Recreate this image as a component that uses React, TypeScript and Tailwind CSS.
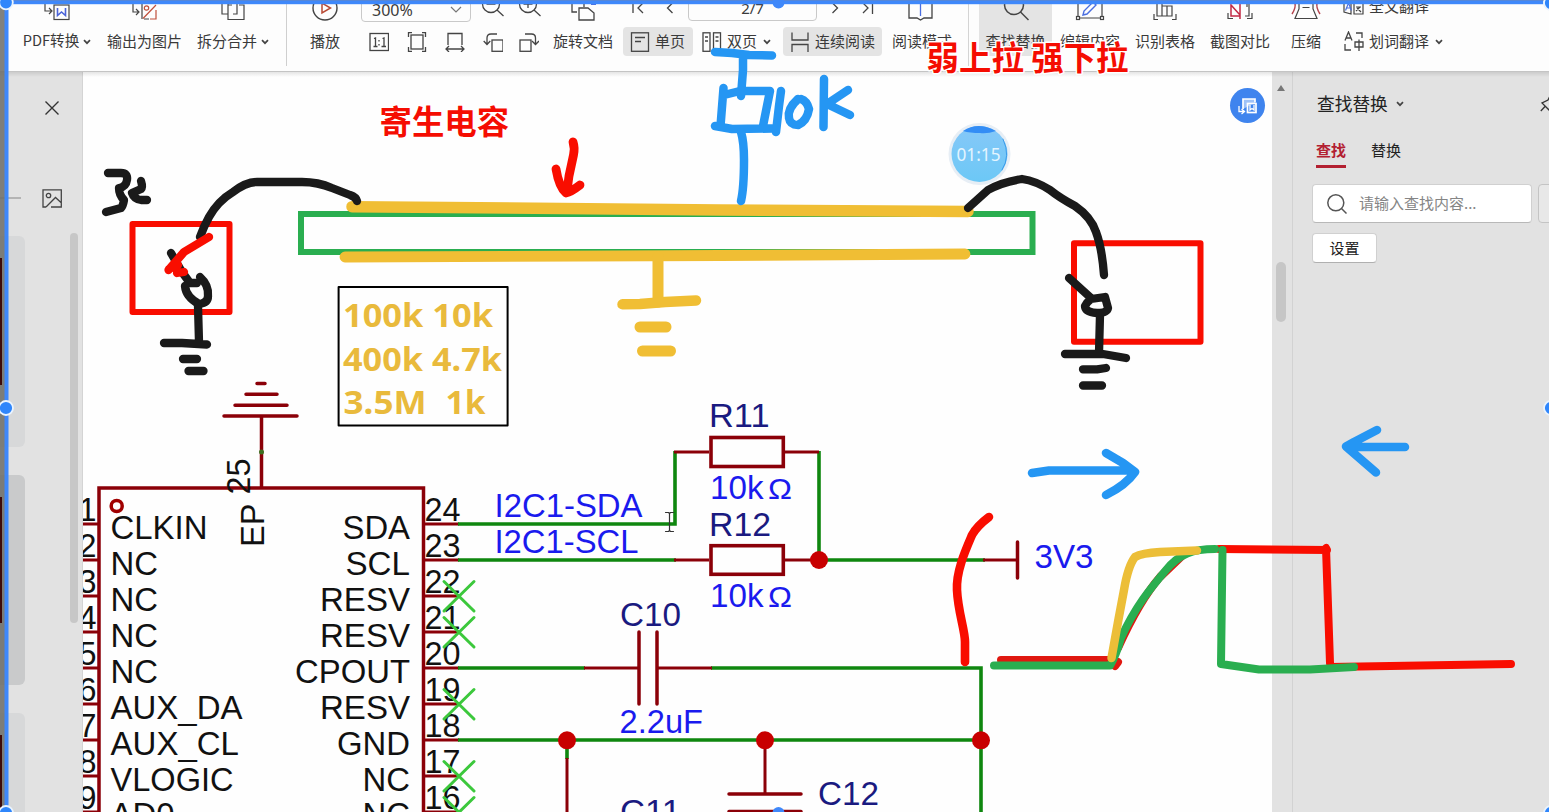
import React from "react";

type Kids = { children?: React.ReactNode };

const Chevron = ({ className = "" }: { className?: string }) => (
  <svg width="8" height="6" viewBox="0 0 8 6" className={"shrink-0 " + className} fill="none" stroke="#444" strokeWidth="1.7">
    <path d="M1 1.2 4 4.2 7 1.2" />
  </svg>
);

const TopIcon = ({ children }: Kids) => (
  <svg width="30" height="27" viewBox="0 0 30 27" className="block shrink-0" fill="none" stroke="#444" strokeWidth="1.2">
    {children}
  </svg>
);

const RowIcon = ({ children, className = "" }: Kids & { className?: string }) => (
  <svg width="20" height="20" viewBox="0 0 20 20" className={"shrink-0 " + className} fill="none" stroke="#444" strokeWidth="1.3">
    {children}
  </svg>
);

const Tool = ({ icon, label, className, arrow }: { icon: React.ReactNode; label: string; className: string; arrow?: boolean }) => (
  <div className={"flex h-14 shrink-0 flex-col items-center " + className}>
    {icon}
    <div className="flex h-[29px] items-center">
      <span className="pb-[2px]">{label}</span>
      {arrow && <Chevron className="ml-1" />}
    </div>
  </div>
);

function Toolbar() {
  return (
    <header className="z-10 flex h-[72px] shrink-0 items-start overflow-hidden whitespace-nowrap border-b border-[#c4c4c4] bg-[#fdfdfd] text-[15px] leading-none text-[#3a3a3a]">
      <Tool
        className="ml-[23px] w-[68px] text-[14.6px]"
        label="PDF转换"
        arrow
        icon={
          <TopIcon>
            <path d="M3 3v8h6M7 8l3 3-3 3" />
            <rect x="12" y="5" width="15" height="14.5" />
            <path d="M15.5 8v7.500l4-3.500 4 3.500V8" stroke="#4a63d8" strokeWidth="1.600" />
          </TopIcon>
        }
      />
      <Tool
        className="ml-4 w-[75px]"
        label="输出为图片"
        icon={
          <TopIcon>
            <path d="M3 3v9h5M6 9l3 3-3 3M12 2v17M14 19h5" />
            <circle cx="16.500" cy="8" r="2.200" stroke="#c0503c" />
            <path d="M13 18.500 26 5M26 10v9h-6" stroke="#c0503c" />
          </TopIcon>
        }
      />
      <Tool
        className="ml-[15px] w-[72px]"
        label="拆分合并"
        arrow
        icon={
          <TopIcon>
            <path d="M4 2v12h6M10 4v15.500h16V5h-5M10 5h4M15 14h4V4" />
          </TopIcon>
        }
      />
      <div className="ml-[17px] h-[66px] w-px shrink-0 bg-[#cfcfcf]" />
      <Tool
        className="ml-[23px] w-[30px]"
        label="播放"
        icon={
          <TopIcon>
            <circle cx="15" cy="8" r="12" strokeWidth="1.400" />
            <path d="M12 3v10l8.500-5z" stroke="#b84a35" strokeWidth="1.500" />
          </TopIcon>
        }
      />

      <div className="ml-[21px] flex w-[600px] shrink-0 flex-col">
        <div className="flex h-[27px] items-start">
          <div className="-mt-1 flex h-[26px] w-[110px] shrink-0 items-center justify-between rounded border border-[#c9c9c9] pl-[10px] pr-2 pt-px">
            <span className="font-['Noto_Sans','Open_Sans',sans-serif] text-[16px]">300%</span>
            <svg width="12" height="8" viewBox="0 0 12 8" fill="none" stroke="#777" strokeWidth="1.200">
              <path d="M1 1l5 5 5-5" />
            </svg>
          </div>
          <svg width="212" height="27" viewBox="471 0 212 27" className="shrink-0" fill="none" stroke="#444" strokeWidth="1.300">
            <circle cx="491" cy="4" r="8.500" />
            <path d="M497 10l6.500 6M486.500 4h9" />
            <circle cx="528" cy="4" r="8.500" />
            <path d="M534 10l6.500 6M523.500 4h9M528-1v9" />
            <path d="M572 3v9h5M579 20V8h9l6 5v7zM584 4v3" />
            <path d="M591 4h5" stroke="#4a6ee0" strokeWidth="2" />
            <path d="M633 3v10M643 3l-5 5 5 5M672.500 3l-5 5 5 5" />
          </svg>
          <div className="-mt-1 ml-[5px] flex h-[25px] w-[129px] shrink-0 items-center justify-center rounded border border-[#c9c9c9] font-['Noto_Sans','Open_Sans',sans-serif] text-[15px]">2/7</div>
          <svg width="140" height="27" viewBox="817 0 140 27" className="shrink-0" fill="none" stroke="#444" strokeWidth="1.300">
            <path d="M832.500 3l5 5-5 5M863 3l5 5-5 5M872.500 3v11" />
            <path d="M909 2v16h8l3.500 2 3.500-2h8V2M909 1h8l3.500 2L924 1h8" />
            <path d="M920.500 3v13" stroke="#4a6ee0" />
          </svg>
        </div>
        <div className="flex h-[29px] items-center">
          <RowIcon className="ml-2">
            <rect x="1" y="1.500" width="18.500" height="17" />
            <path d="M5 6.500 6.500 6v8.500M4.500 14.500h4M13.500 6.500 15 6v8.500M12.500 14.500h4.500M10 8v1.500M10 12v1.500" />
          </RowIcon>
          <RowIcon className="ml-[18px]">
            <rect x="4" y="3" width="12" height="14" />
            <path d="M1.500 5V.7H5M15 .7h3.500V5M1.500 15v4.300H5M15 19.300h3.500V15" />
          </RowIcon>
          <RowIcon className="ml-[18px]">
            <path d="M3 13V1.500h14V13M1 17h18M4 14l-3 3 3 3M16 14l3 3-3 3" />
          </RowIcon>
          <RowIcon className="ml-[18px]">
            <rect x="9" y="8" width="11" height="11.300" />
            <path d="M14 2H8Q4 2 4 6v6M.7 9 4 12.500 7.300 9" />
          </RowIcon>
          <RowIcon className="ml-4">
            <rect x="1" y="8" width="11" height="11.300" />
            <path d="M6 2h6.500q4 0 4 4v6M13 9l3.500 3.500L20 9" />
          </RowIcon>
          <span className="ml-[14px] w-[61px] pb-[2px]">旋转文档</span>
          <div className="ml-[9px] flex h-[29px] w-[70px] shrink-0 items-center rounded bg-[#e4e4e4] pl-[7px]">
            <RowIcon>
              <rect x="1.500" y=".8" width="17" height="18.500" />
              <path d="M5 5.500h10M5 9.500h6" />
            </RowIcon>
            <span className="ml-[5px] pb-[2px]">单页</span>
          </div>
          <RowIcon className="ml-[9px]">
            <rect x="1" y=".8" width="7" height="18.500" />
            <rect x="11.500" y=".8" width="7" height="18.500" />
            <path d="M3 5h3M3 9h3M13.500 5h3M13.500 9h3" />
          </RowIcon>
          <span className="ml-[5px] w-[30px] pb-[2px]">双页</span>
          <Chevron className="ml-[6px]" />
          <div className="ml-3 flex h-[29px] w-[99px] shrink-0 items-center rounded bg-[#e4e4e4] pl-[7px]">
            <RowIcon>
              <path d="M2 .5V8h16V.5M2 20v-7.500h16V20" />
            </RowIcon>
            <span className="ml-[5px] pb-[2px]">连续阅读</span>
          </div>
          <span className="ml-[10px] w-[60px] pb-[2px]">阅读模式</span>
        </div>
      </div>

      <div className="ml-[7px] h-[66px] w-px shrink-0 bg-[#d4d4d4]" />
      <Tool
        className="ml-[10px] w-[73px] rounded-b bg-[#e4e4e4]"
        label="查找替换"
        icon={
          <TopIcon>
            <circle cx="13" cy="5" r="9.500" strokeWidth="1.500" />
            <path d="m19.500 12 8 8" strokeWidth="1.500" />
          </TopIcon>
        }
      />
      <Tool
        className="ml-[8px] w-[60px]"
        label="编辑内容"
        icon={
          <TopIcon>
            <path d="M3 4v12M27 4v12M5 18h20" />
            <rect x="1.500" y="16.500" width="3" height="3" />
            <rect x="25.500" y="16.500" width="3" height="3" />
            <path d="m8 15 1-4 9-9 3 3-9 9z" stroke="#4a6ee0" strokeWidth="1.400" />
          </TopIcon>
        }
      />
      <Tool
        className="ml-[15px] w-[60px]"
        label="识别表格"
        icon={
          <TopIcon>
            <path d="M4 14v5.500h4M22 19.500h4V14M7 3v13h5V3M12 6h5v10h-5M17 6h5v10h-5" />
          </TopIcon>
        }
      />
      <Tool
        className="ml-[15px] w-[60px]"
        label="截图对比"
        icon={
          <TopIcon>
            <path d="M3 13v5.500h5M22 18.500h5V13M20 16h4V4M22 3v4" />
            <path d="M15 2v17M15 16H6V5l9 10" stroke="#c22a45" strokeWidth="1.500" />
          </TopIcon>
        }
      />
      <Tool
        className="ml-[21px] w-[30px]"
        label="压缩"
        icon={
          <TopIcon>
            <path d="M8 3v6L4 18.500h22L22 9V3M11.500 7.500h7" />
            <path d="M4 3q1 5-3 11M26 3q-1 5 3 11" stroke="#b5444e" strokeWidth="1.500" />
          </TopIcon>
        }
      />
      <div className="ml-[22px] flex shrink-0 flex-col">
        <div className="flex h-[27px] items-start">
          <svg width="21" height="16" viewBox="0 0 21 16" fill="none" stroke="#444" strokeWidth="1.200">
            <path d="M11 3H1v9l7 2V4M11 3h9v11h-9zM13 7h5M13 11l4-4M14 8l4 4" />
            <path d="M2.500 10.500 5.500 3l3 7.500M3.500 8h4" stroke="#4a6ee0" />
          </svg>
          <span className="-mt-[2px] ml-[5px]">全文翻译</span>
        </div>
        <div className="flex h-[29px] items-center">
          <svg width="21" height="21" viewBox="0 0 21 21" fill="none" stroke="#444" strokeWidth="1.300">
            <path d="M2 9.500 5.500 1 9 9.500M3 7h5M13 2h6v5M2 13v6h6M12 11h8v5h-8zM16 8.500V20" />
          </svg>
          <span className="ml-[5px] pb-[2px]">划词翻译</span>
          <Chevron className="ml-[6px]" />
        </div>
      </div>
    </header>
  );
}

function Sidebar() {
  return (
    <aside className="flex w-[83px] shrink-0 overflow-hidden border-r border-[#d4d4d4] bg-[#e2e2e2]">
      <div className="flex w-[25px] flex-col">
        <div className="mt-[125px] h-[2px] w-[21px] shrink-0 bg-[#b4b4b4]" />
        <div className="mt-[37px] h-[211px] shrink-0 rounded-r-md bg-[#d7d8d9]" />
        <div className="mt-[28px] h-[210px] shrink-0 rounded-r-md bg-[#c9cacb]" />
        <div className="mt-[28px] h-[99px] shrink-0 rounded-tr-md bg-[#d7d8d9]" />
      </div>
      <div className="flex w-[45px] flex-col pl-[17px]">
        <svg width="20" height="14" viewBox="0 0 20 14" className="mt-[29px]" fill="none" stroke="#333" strokeWidth="1.400">
          <path d="M3.500.5 16.500 13.500M16.500.5 3.500 13.500" />
        </svg>
        <svg width="20" height="19" viewBox="0 0 20 19" className="mt-[74px]" fill="none" stroke="#444" strokeWidth="1.300">
          <path d="M4 18H1V.8h18.300V18H9M4 18l9.500-9.500 6 5.500" />
          <circle cx="6.500" cy="6.500" r="2.200" />
        </svg>
      </div>
      <div className="mt-[161px] h-[390px] w-[8px] rounded-full bg-[#c7c7c7]" />
    </aside>
  );
}

const BASE = [539, 575, 611, 647, 683, 719, 754.5, 790.5, 826];
const LEFT: [string, number][] = [["CLKIN", 97], ["NC", 47.5], ["NC", 47.5], ["NC", 47.5], ["NC", 47.5], ["AUX_DA", 132], ["AUX_CL", 128.5], ["VLOGIC", 123], ["AD0", 64]];
const RIGHT: [string, number][] = [["SDA", 67.5], ["SCL", 64.5], ["RESV", 90], ["RESV", 90], ["CPOUT", 115], ["RESV", 90], ["GND", 73], ["NC", 47.5], ["NC", 47.5]];

type TProps = { x: number; y: number; w: number; fill?: string; s: string };
const T = ({ x, y, w, fill = "#111", s }: TProps) => (
  <text x={x} y={y} textLength={w} lengthAdjust="spacingAndGlyphs" fill={fill}>
    {s}
  </text>
);

function Schematic() {
  const name = "#1a1a80";
  const val = "#1a1aee";
  return (
    <svg width="1189" height="740" viewBox="83 72 1189 740" className="block shrink-0 font-['Liberation_Sans'] text-[33.5px]">
      <g stroke="#8b0008" strokeWidth="3.500" fill="none">
        <path d="M224 416h73M235 405.300h52M246 394.300h31M257 383.500h8" strokeLinecap="round" />
        <path d="M261.500 417v70" />
        <rect x="99" y="488" width="324.500" height="360" />
        {BASE.map((_, i) => (
          <path key={i} d={`M83 ${524 + 36 * i}h16M424 ${524 + 36 * i}h35`} strokeWidth="3" />
        ))}
        <circle cx="116.700" cy="506" r="5.500" stroke="#a00000" />
      </g>
      <circle cx="261.500" cy="452" r="2.500" fill="#3d7020" />

      <g stroke="#0f870f" strokeWidth="3.600" fill="none">
        <path d="M458 524h217V451M458 560h218M819 451v109h166M458 668h127M711 668h270v144M458 740h523M567 740v19" />
      </g>
      <g stroke="#8b0008" strokeWidth="3" fill="none">
        <path d="M674 452h35M785 452h34M674 560h35M785 560h30M584 668h55M657 668h55M983 560h34M567 758v54M765 748v45" />
        <path d="M639 632v72M657 632v72M1017.500 542v36M729 794h72M729 811.500h72" strokeWidth="3.500" strokeLinecap="round" />
        <rect x="711" y="437.500" width="72.300" height="29" strokeWidth="3.600" />
        <rect x="711" y="545.700" width="72.300" height="28.600" strokeWidth="3.600" />
      </g>
      <g fill="#c80000">
        <circle cx="819" cy="560" r="9" />
        <circle cx="567" cy="740.300" r="9" />
        <circle cx="765" cy="740.300" r="9" />
        <circle cx="981" cy="740.300" r="9" />
      </g>

      {LEFT.map(([s, w], i) => (
        <T key={i} x={110.500} y={BASE[i]} w={w} s={s} />
      ))}
      {RIGHT.map(([s, w], i) => (
        <T key={i} x={410 - w} y={BASE[i]} w={w} s={s} />
      ))}
      {BASE.map((_, i) => (
        <g key={i}>
          <T x={78.500} y={521 + 36 * i} w={18} s={String(i + 1)} />
          <T x={424.500} y={521 + 36 * i} w={36} s={String(24 - i)} />
        </g>
      ))}
      <g transform="translate(264.300 547) rotate(-90)">
        <T x={0} y={0} w={43.500} s="EP" />
      </g>
      <g transform="translate(250 494.500) rotate(-90)">
        <T x={0} y={0} w={36} s="25" />
      </g>

      <g stroke="#3cc83c" strokeWidth="3" strokeLinecap="round">
        {[596, 632, 704, 776, 812].map((y) => (
          <path key={y} d={`M444 ${y - 14.500}l30 29.500M474 ${y - 14.500}l-30 29.500`} />
        ))}
      </g>

      <T x={494.500} y={517} w={148} fill={val} s="I2C1-SDA" />
      <T x={494.500} y={553} w={144} fill={val} s="I2C1-SCL" />
      <T x={709} y={426.700} w={60.500} fill={name} s="R11" />
      <T x={709} y={535.500} w={62} fill={name} s="R12" />
      <T x={710} y={499.300} w={53.500} fill={val} s="10k" />
      <T x={710} y={606.700} w={53.500} fill={val} s="10k" />
      <g className="text-[30px]">
        <T x={768} y={499} w={24} fill={val} s="Ω" />
        <T x={768} y={606.500} w={24} fill={val} s="Ω" />
      </g>
      <T x={620} y={625.700} w={61} fill={name} s="C10" />
      <T x={620} y={823} w={61} fill={name} s="C11" />
      <T x={818} y={805} w={61} fill={name} s="C12" />
      <T x={619.500} y={733} w={83.500} fill={val} s="2.2uF" />
      <T x={1034.500} y={568} w={59} fill={val} s="3V3" />
    </svg>
  );
}

function FindPanel() {
  return (
    <aside className="flex min-w-0 grow flex-col overflow-hidden whitespace-nowrap border-l border-[#d2d2d2] bg-[#e2e2e2] pl-[19px] text-[15px] leading-none text-[#222]">
      <div className="mt-[22px] flex h-[20px] shrink-0 items-center pl-[5px]">
        <span className="w-[71px] text-[17.700px]">查找替换</span>
        <Chevron className="ml-2" />
        <svg width="18" height="18" viewBox="0 0 18 18" className="ml-[136px] shrink-0" fill="none" stroke="#333" strokeWidth="1.300">
          <path d="M10 1 8 5 2 8l7 7 3-6 4-2zM5 11.500.8 16" />
        </svg>
      </div>
      <div className="mt-[21px] flex h-[33px] shrink-0 pl-1">
        <div className="flex h-[33px] w-[30px] flex-col justify-between pt-[7px] font-bold text-[#b32031]">
          查找
          <div className="h-[3px] bg-[#b32031]" />
        </div>
        <span className="ml-[25px] pt-[7px]">替换</span>
      </div>
      <div className="mt-4 flex h-[39px] shrink-0">
        <div className="flex w-[220px] shrink-0 items-center rounded border border-[#d0d0d0] border-b-[#b8b8b8] bg-white pl-[14px] text-[#858585]">
          <svg width="20" height="20" viewBox="0 0 20 20" fill="none" stroke="#555" strokeWidth="1.500">
            <circle cx="8.800" cy="8.800" r="8" />
            <path d="m14.500 14.500 5 5" />
          </svg>
          <span className="ml-3 pb-[2px]">请输入查找内容...</span>
        </div>
        <div className="ml-[6px] w-[30px] shrink-0 rounded border border-[#c4c4c4] bg-[#e8e8e8]" />
      </div>
      <div className="mt-[10px] flex h-[30px] w-[65px] shrink-0 items-center justify-center rounded border border-[#d0d0d0] border-b-[#b0b0b0] bg-white pb-[2px]">设置</div>
    </aside>
  );
}

function Annotations() {
  return (
    <svg width="1549" height="812" viewBox="0 0 1549 812" className="pointer-events-none absolute inset-0 z-20" fill="none" strokeLinecap="round" strokeLinejoin="round">
      <defs>
        <linearGradient id="bubble" x1="0" y1="0" x2="0" y2="1">
          <stop offset="0" stopColor="#86c8f8" />
          <stop offset="1" stopColor="#6cc8f6" />
        </linearGradient>
      </defs>

      <g stroke="#2aae50" strokeWidth="6">
        <rect x="301" y="214" width="731.500" height="38" strokeLinejoin="miter" />
      </g>
      <g stroke="#f0be34">
        <path d="M352 206.700 720 210 968 211.500" strokeWidth="11.500" />
        <path d="M345 257 720 255.500 965 254" strokeWidth="10.800" />
        <path d="M658 257v45" strokeWidth="11" />
        <path d="M622.500 304.300 640 304l25-2 31-1.500" strokeWidth="10.500" />
        <path d="M640 327h26M642.500 351h28" strokeWidth="11" />
      </g>

      <g stroke="#f90d00">
        <rect x="132.500" y="224" width="97" height="88" strokeWidth="6" />
        <rect x="1074" y="243.300" width="126.500" height="98.500" strokeWidth="6" />
        <path d="M573 142Q575 148 573.500 155T569 176L567 191M556 169q3 18 10 24 5-1 14-8" strokeWidth="8.800" />
        <path d="M989 517Q977 526 972 535C966 549 956 571 957 590 958 612 965 630 965 642V662" strokeWidth="8.600" />
      </g>

      <g stroke="#1a1a1a" strokeWidth="8.300">
        <path d="M108 173h13q7 0 6 7t-8 8q0 7 5 12-1 6-3 8l-15 4" />
        <path d="M141 181q2 6 0 8l-9 4q2 6 9 7h6" />
        <path d="M200 237Q204 226 209 217 218 201 233 192 246 182 257 182H302Q318 182 332 188L350 195Q356 197 357 201" />
        <path d="M171 253 182 272 190 283H197" />
        <path d="M200 277Q209 285 208 296 208 303 199 304 186 297 185 286" />
        <path d="M198 306 199 342M164 343h18l25 1.500M183 359h14M188.500 371h15" />
        <path d="M968 208 988 190Q1002 182 1022 179 1036 181 1050 190 1060 198 1075 206 1091 217 1096 232 1102 248 1104 275" />
        <path d="M1069 278 1091 298M1091 299 1105 297 1108 308Q1107 313 1097 313 1085 312 1085 306 1087 302 1091 299" />
        <path d="M1100 315 1099 353M1065 354H1103L1126 358M1083 369.300H1097L1106 368M1083 385.500h19" />
      </g>
      <path d="M209 237 184 252 168.500 270M169 269 178 265M177 273 184 272" stroke="#f90d00" strokeWidth="8.300" />

      <g stroke="#2596f3" strokeWidth="8.500">
        <path d="M715 52 732 53 749 55 772 55.500M743 56V70L741 96" />
        <path d="M723.500 88 720.500 126M724 95 740 91H770L763 126M715 126 732 129 772 128.500" />
        <path d="M781 91 779 106 776 132M798 99Q787 109 789 118 790 125 798 125 807 121 809 109 807 101 801 99M824 79 823.500 127M848 90 827 104 850 115" />
        <path d="M741 132Q744 142 744 160 744 188 741 201" />
        <path d="M1032 473 1049 470.500H1132M1106 453 1123 463 1135 472Q1126 485 1106 495M1405 447H1348M1377 430 1354 442 1346 446.500 1376 472.500" />
      </g>

      <g strokeWidth="8">
        <path d="M1001 660h107M1118 662 1115 666M1118 648Q1140 600 1160 577L1185 553" stroke="#e01810" />
        <path d="M1219 549 1327 550 1326 548 1330 663M1330 667 1511 664" stroke="#f90d00" />
        <path d="M994 665.500h116Q1116 656 1121 638C1135 607 1150 589 1166 570 1179 554 1193 549 1215 549" stroke="#2aae50" />
        <path d="M1222.500 550 1221 664 1259 669.500H1310L1354 667" stroke="#2aae50" />
        <path d="M1111.500 658 1118 622 1124 590Q1128 566 1135 557 1142 553 1160 552L1197 550.500" stroke="#ecbe38" strokeWidth="8.500" />
      </g>

      <rect x="338.600" y="287" width="169" height="138.600" stroke="#000" strokeWidth="2" />
      <g fill="#e9ba3c" className="font-['Noto_Sans','Open_Sans',sans-serif] text-[33px] font-bold">
        <text x="343" y="326.500" textLength="150" lengthAdjust="spacingAndGlyphs">100k 10k</text>
        <text x="343" y="370.500" textLength="159" lengthAdjust="spacingAndGlyphs">400k 4.7k</text>
        <text x="343.500" y="413.500" textLength="83" lengthAdjust="spacingAndGlyphs">3.5M</text>
        <text x="445.500" y="413.500" textLength="40" lengthAdjust="spacingAndGlyphs">1k</text>
      </g>
      <g fill="#f50d02" stroke="#fff" strokeWidth="3" paintOrder="stroke" className="font-['Noto_Sans_CJK_SC'] text-[32.400px] font-bold">
        <text x="379.500" y="134">寄生电容</text>
        <text x="926.500" y="70" textLength="202">弱上拉 强下拉</text>
      </g>

      <circle cx="979.500" cy="154" r="31" fill="#e7eef5" />
      <circle cx="979.500" cy="154" r="28" fill="url(#bubble)" />
      <path d="M963 131q15-10 33 0-9 3-16 2-10 0-17-2z" fill="#338df5" />
      <path d="M1003 139q8 17-1 31" stroke="#3a9bea" strokeWidth="1" />
      <text x="956.500" y="160.500" textLength="44" lengthAdjust="spacingAndGlyphs" fill="#e3f5ff" className="font-['Noto_Sans','Open_Sans',sans-serif] text-[17.500px]">
        01:15
      </text>

      <circle cx="1247.500" cy="105.500" r="17.500" fill="#3f84ee" />
      <g stroke="#fff" strokeWidth="1.700" strokeLinecap="butt" strokeLinejoin="miter">
        <path d="M1243 109V99h12v3.500" fill="#fff" fillOpacity=".5" />
        <rect x="1247.500" y="103.500" width="8.500" height="9" />
        <path d="M1250 105v5l2-1.500 2 1.500v-5" strokeWidth="1.300" />
        <path d="M1239 106v5.500h5M1241.500 109l3 2.500-3 2.500" strokeWidth="1.300" />
      </g>

      <path d="M665.500 512.500h3l1 1 1-1h3M665.500 531.500h3l1-1 1 1h3M669.500 513.500v17" stroke="#333" strokeWidth="1.200" />
    </svg>
  );
}

function SelectionFrame() {
  return (
    <svg width="1549" height="812" viewBox="0 0 1549 812" className="pointer-events-none absolute inset-0 z-30">
      <rect x="0" y="0" width="5" height="812" fill="#6f706b" fillOpacity=".88" />
      <path d="M0 258h2v127H0zM0 497h2v126H0zM0 735h2v77H0z" fill="#3c0a0a" />
      <rect x="0" y="0" width="1549" height="1" fill="#6f86b4" />
      <rect x="4.500" y="0" width="4" height="812" fill="#3f88fa" />
      <rect x="4.500" y=".5" width="1539" height="3.700" fill="#3f88fa" />
      <g fill="#2f86fb" stroke="#eaf4ff" strokeWidth="1.800">
        <circle cx="6" cy="2.500" r="6.800" />
        <circle cx="6" cy="408" r="7" />
        <circle cx="6" cy="813" r="7" />
        <circle cx="1551" cy="3" r="7" />
        <circle cx="1551" cy="408" r="7" />
        <circle cx="1551" cy="813" r="7" />
      </g>
      <circle cx="778.500" cy="2.500" r="6" fill="#3f88fa" />
      <circle cx="778.500" cy="813" r="6" fill="#3f88fa" />
    </svg>
  );
}

export default function App() {
  return (
    <div className="relative flex h-[812px] w-[1549px] flex-col overflow-hidden bg-white font-['Noto_Sans_CJK_SC',sans-serif]">
      <Toolbar />
      <main className="flex h-[740px]">
        <Sidebar />
        <section className="w-[1189px] shrink-0 overflow-hidden bg-[#fefefe]">
          <Schematic />
        </section>
        <div className="flex w-5 shrink-0 flex-col items-center bg-[#e2e2e2]">
          <svg width="8" height="6" viewBox="0 0 8 6" className="-ml-[2px] mt-[13px]">
            <path d="M0 6 4 0l4 6z" fill="#777" />
          </svg>
          <div className="-ml-[2px] mt-[171px] h-[60px] w-[10px] rounded-full bg-[#c6c6c6]" />
        </div>
        <FindPanel />
      </main>
      <div className="pointer-events-none absolute inset-x-0 top-[72px] h-[5px] bg-gradient-to-b from-black/10 to-transparent" />
      <Annotations />
      <SelectionFrame />
    </div>
  );
}
